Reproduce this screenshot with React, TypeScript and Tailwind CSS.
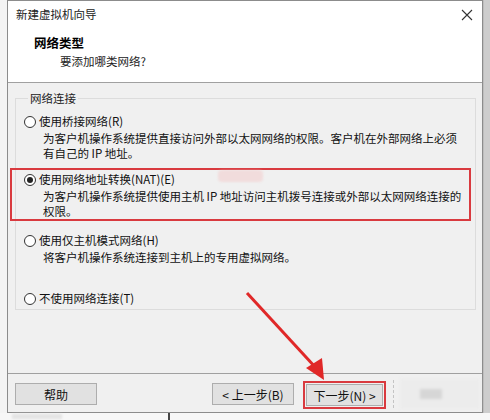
const font = { fontFamily: '"Noto Sans CJK SC", "Noto Sans", sans-serif' };

const Radio = ({ checked }: { checked?: boolean }) => (
    <span className='w-[12px] h-[12px] rounded-full border border-[#333] bg-white flex items-center justify-center shrink-0'>
        {checked && <span className='w-[6px] h-[6px] rounded-full bg-[#222]' />}
    </span>
);

const Option = ({ label, lines, checked }: { label: string; lines: string[]; checked?: boolean }) => (
    <div>
        <div className='flex items-center gap-[3px] h-[15px]'>
            <Radio checked={checked} />
            <span className='whitespace-nowrap'>{label}</span>
        </div>
        {lines.map((l, i) => (
            <div key={i} className={'pl-[19px] whitespace-nowrap ' + (i === 0 ? 'mt-[2px]' : '')}>{l}</div>
        ))}
    </div>
);

const Btn = ({ children, w }: { children: React.ReactNode; w: string }) => (
    <div className={'h-[22px] bg-[#e1e1e1] border border-[#adadad] flex items-center justify-center text-[12px] text-[#111] ' + w}>
        {children}
    </div>
);

export default function App() {
    return (
        <div className='w-[490px] h-[420px] bg-[#f4f4f4] relative overflow-hidden text-[11.5px] leading-[15px] text-[#111]' style={font}>
            <div className='flex h-[413px]'>
                <div className='w-[7px] bg-[#f4f4f4]' />
                <div className='w-[476px] border-x border-b border-t border-[#8c8c8c] bg-[#f0f0f0] flex flex-col'>
                    {/* title bar */}
                    <div className='h-[27px] bg-white flex items-center justify-between pl-[8px] pr-[8px]'>
                        <span className='text-[11.5px] text-[#222]'>新建虚拟机向导</span>
                        <svg width='12' height='12' viewBox='0 0 12 12' className='mr-[1px]'>
                            <path d='M1 1L11 11M11 1L1 11' stroke='#333' strokeWidth='1.1' />
                        </svg>
                    </div>
                    {/* header */}
                    <div className='h-[55px] bg-white border-b border-[#a0a0a0] pt-[7px] pl-[26px]'>
                        <div className='font-bold text-[12.5px] leading-[16px] text-black'>网络类型</div>
                        <div className='pl-[26px] mt-[3px] text-[#222]'>要添加哪类网络?</div>
                    </div>
                    {/* body */}
                    <div className='flex-1 pt-[8px] pl-[7px] pr-[8px]'>
                        <fieldset className='border border-[#dcdcdc] h-[219px] pl-[8px] pr-[4px]'>
                            <legend className='ml-[4px] px-[2px] text-[#222]'>网络连接</legend>
                            <div className='mt-[8px]'>
                                <Option label='使用桥接网络(R)' lines={['为客户机操作系统提供直接访问外部以太网网络的权限。客户机在外部网络上必须', '有自己的 IP 地址。']} />
                            </div>
                            <div className='mt-[7px] -ml-[14px] w-[461px] border-2 border-[#d93a3f] pl-[12px] pt-[2px]'>
                                <Option checked label='使用网络地址转换(NAT)(E)' lines={['为客户机操作系统提供使用主机 IP 地址访问主机拨号连接或外部以太网网络连接的', '权限。']} />
                            </div>
                            <div className='mt-[12px]'>
                                <Option label='使用仅主机模式网络(H)' lines={['将客户机操作系统连接到主机上的专用虚拟网络。']} />
                            </div>
                            <div className='mt-[26px]'>
                                <Option label='不使用网络连接(T)' lines={[]} />
                            </div>
                        </fieldset>
                    </div>
                    {/* footer */}
                    <div className='h-[39px] border-t border-[#a0a0a0] flex items-start pt-[9px] pl-[7px] pr-[2px]'>
                        <Btn w='w-[82px]'>帮助</Btn>
                        <div className='flex-1' />
                        <Btn w='w-[82px]'>&lt; 上一步(B)</Btn>
                        <div className='ml-[9px] -mt-[2px] border-2 border-[#d93a3f] p-[1px]'>
                            <Btn w='w-[77px]'>下一步(N) &gt;</Btn>
                        </div>
                        <div className='ml-[7px] -mt-[3px] h-[28px] border-l border-dashed border-[#c4c4c4]' />
                        <div className='ml-[6px] -mt-[4px] w-[80px] h-[30px] bg-[#ececec] flex items-center pl-[20px] blur-[1.5px]'>
                            <div className='w-[22px] h-[10px] bg-[#d6d6d6]' />
                        </div>
                    </div>
                </div>
                <div className='w-[7px] bg-[#cdcdcd] border-l border-[#bdbdbd]' />
            </div>
            {/* bottom strip */}
            <div className='flex h-[7px] bg-[#f7f7f7]'>
                <div className='ml-[12px] mt-[1px] w-[50px] h-[5px] bg-[#e4e4e4] blur-[1px]' />
                <div className='ml-[106px] w-[2px] bg-[#444]' />
            </div>
            {/* faint watermark smudge */}
            <div className='absolute left-[218px] top-[170px] w-[45px] h-[12px] bg-[#f3c9c9] opacity-50 rounded-sm blur-[1px] pointer-events-none' />
            {/* red arrow */}
            <svg className='absolute left-0 top-0 pointer-events-none' width='490' height='420'>
                <line x1='247' y1='293' x2='316' y2='368' stroke='#e02828' strokeWidth='3' />
                <polygon points='324,380 306,368 322,358' fill='#e02828' />
            </svg>
        </div>
    );
}
